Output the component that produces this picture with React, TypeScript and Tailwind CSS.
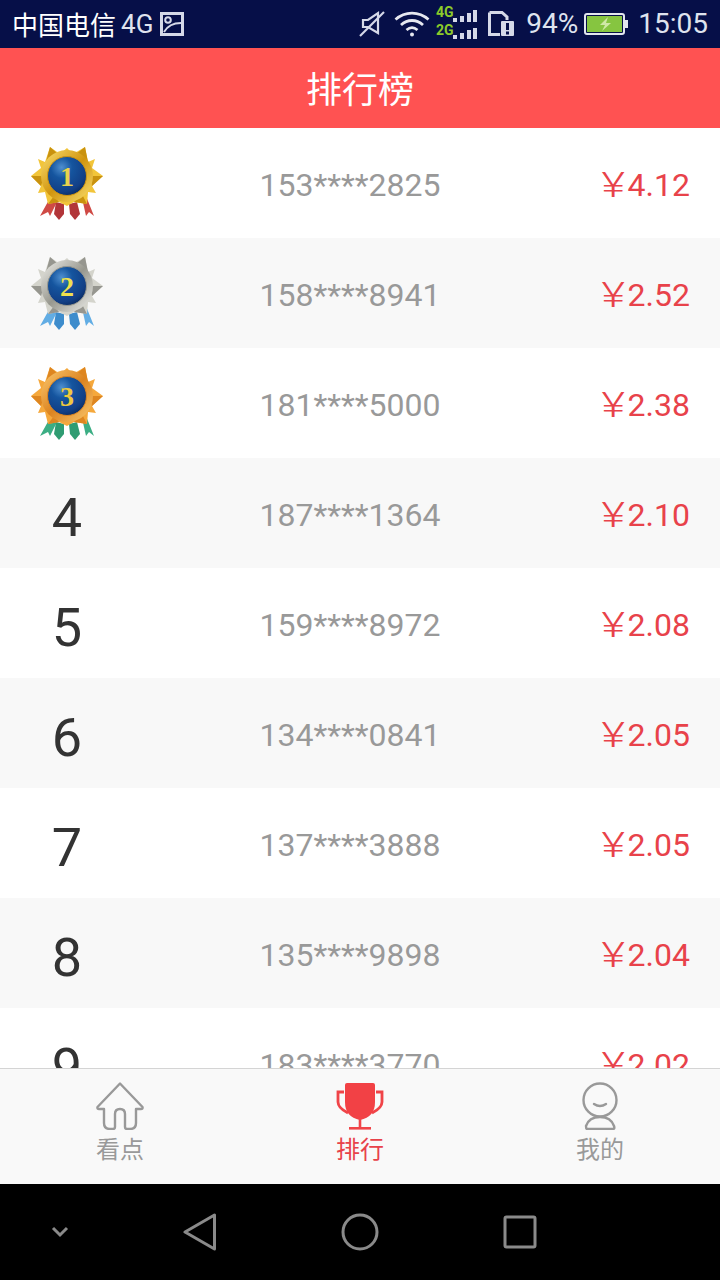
import React from "react";

const rows = [
  ["153****2825", "4.12"],
  ["158****8941", "2.52"],
  ["181****5000", "2.38"],
  ["187****1364", "2.10"],
  ["159****8972", "2.08"],
  ["134****0841", "2.05"],
  ["137****3888", "2.05"],
  ["135****9898", "2.04"],
  ["183****3770", "2.02"],
];

const cjk = "font-['Roboto','Noto_Sans_CJK_SC',sans-serif]";

type MedalProps = { n: number; star: string; starDark: string; ring: string; ringDark: string; ribA: string; ribB: string; num: string };

function Medal({ n, star, starDark, ring, ringDark, ribA, ribB, num }: MedalProps) {
  const id = `m${n}`;
  return (
    <svg width="78" height="80" viewBox="0 0 78 80">
      <defs>
        <radialGradient id={id} cx="36%" cy="28%" r="78%">
          <stop offset="0" stopColor="#4f8fcf" />
          <stop offset="0.35" stopColor="#15559f" />
          <stop offset="0.8" stopColor="#123f86" />
          <stop offset="1" stopColor="#0a2a5e" />
        </radialGradient>
        <linearGradient id={`${id}r`} x1="0" y1="0" x2="1" y2="1">
          <stop offset="0" stopColor={ring} />
          <stop offset="0.5" stopColor={ringDark} />
          <stop offset="1" stopColor={ring} />
        </linearGradient>
      </defs>
      <path d="M22 56 L12 74 L20 70 L22 74 L29 60Z" fill={ribA} />
      <path d="M28 60 L26 72 L31 78 L36 72 L36 62Z" fill={ribB} />
      <path d="M41 62 L42 72 L47 78 L52 72 L49 60Z" fill={ribB} />
      <path d="M54 56 L58 74 L61 70 L66 74 L58 54Z" fill={ribA} />
      <path d="M22 5 L32 12 L39 6 L45 12 L57 5 L60 20 L67 17 L64 26 L75 34 L64 44 L68 51 L60 50 L59 62 L46 60 L39 64 L31 60 L20 62 L17 50 L10 51 L13 44 L3 34 L13 26 L10 17 L17 20Z" fill={star} />
      <path d="M57 5 L60 20 L48 12Z M75 34 L64 44 L62 34Z M59 62 L46 60 L54 52Z M3 34 L16 34 L13 44Z M20 62 L26 54 L31 60Z M22 5 L30 12 L18 20Z" fill={starDark} />
      <circle cx="39" cy="34" r="26" fill={`url(#${id}r)`} />
      <circle cx="39" cy="34" r="19.500" fill={`url(#${id})`} stroke={ringDark} strokeWidth="1" />
      <text x="39" y="44" textAnchor="middle" fontFamily="'Liberation Serif',serif" fontWeight="700" fontSize="28" fill={num}>{n}</text>
    </svg>
  );
}

const medals = [
  { star: "#f2c53a", starDark: "#c9920f", ring: "#fbe070", ringDark: "#d1950f", ribA: "#cf4a45", ribB: "#b23539", num: "#e9d24e" },
  { star: "#d4d4cc", starDark: "#96968f", ring: "#f0f0ec", ringDark: "#98988f", ribA: "#62ade4", ribB: "#3d8ccc", num: "#efe04e" },
  { star: "#f5a83c", starDark: "#de8620", ring: "#fbc970", ringDark: "#dc8420", ribA: "#3cae84", ribB: "#2f9c72", num: "#efc83e" },
];

function Row({ i, phone, amount }: { i: number; phone: string; amount: string }) {
  return (
    <div className={`flex h-[110px] shrink-0 items-start ${i % 2 === 1 ? "bg-[#f8f8f8]" : "bg-white"}`}>
      <div className="flex h-full w-[134px] items-center justify-center text-[54px] leading-none text-[#333333]">
        {i < 3 ? (
          <div className="-mt-[2px]">
            <Medal n={i + 1} {...medals[i]} />
          </div>
        ) : (
          <span className="mt-[10px]">{i + 1}</span>
        )}
      </div>
      <div className="flex h-[114px] flex-1 items-center justify-center text-[32px] text-[#999999]">{phone}</div>
      <div className="flex h-[114px] w-[154px] items-center justify-end pr-[30px] text-[32px] text-[#e8424a]">
        <span className="mr-[3px] inline-block origin-right scale-x-[1.3] text-[35px] leading-none font-light">¥</span>
        <span>{amount}</span>
      </div>
    </div>
  );
}

function StatusBar() {
  return (
    <div className="flex h-[48px] shrink-0 items-center bg-[#060f48] pl-[12px] pr-[12px] text-[#dfe3ee]">
      <span className="font-['Noto_Sans_CJK_SC',sans-serif] text-[26px] leading-none text-white">中国电信</span>
      <span className="ml-[5px] text-[26px] leading-none">4G</span>
      <svg className="ml-[7px]" width="24" height="24" viewBox="0 0 24 24" fill="none" stroke="#d5d9e8" strokeWidth="3">
        <rect x="1.500" y="1.500" width="21" height="21" />
        <circle cx="8" cy="8" r="2.800" strokeWidth="2" />
        <path d="M4 20 C8 13 14 11 21 11" strokeWidth="2" />
      </svg>
      <div className="ml-auto flex items-center">
        <svg width="30" height="30" viewBox="0 0 30 30" fill="none" stroke="#d5d9e8" strokeWidth="2.200">
          <path d="M6 11 H11 L21 4 V24 L11 18 H6Z" />
          <path d="M3 27 L27 3" />
        </svg>
        <svg className="ml-[7px]" width="36" height="28" viewBox="0 0 36 28" fill="none" stroke="#e6e8f0" strokeWidth="2.800">
          <path d="M1.500 9.500 C11 1 25 1 34.500 9.500" />
          <path d="M7 15 C13.500 9 22.500 9 29 15" />
          <path d="M12.500 20 C16 17 20 17 23.500 20" />
          <circle cx="18" cy="24.500" r="2" fill="#e6e8f0" stroke="none" />
        </svg>
        <svg className="ml-[6px] overflow-visible" width="42" height="36" viewBox="0 0 42 36">
          <text x="0" y="11" fontFamily="Roboto" fontWeight="700" fontSize="14" fill="#8ccb2a">4G</text>
          <text x="0" y="29" fontFamily="Roboto" fontWeight="700" fontSize="14" fill="#8ccb2a">2G</text>
          <g fill="#d5d9e8">
            <rect x="17" y="12" width="4" height="4" />
            <rect x="24" y="10" width="4" height="6" />
            <rect x="31" y="7" width="4" height="9" />
            <rect x="37" y="4" width="4" height="12" />
            <rect x="17" y="29" width="4" height="4" />
            <rect x="24" y="27" width="4" height="6" />
            <rect x="31" y="24" width="4" height="9" />
            <rect x="37" y="22" width="4" height="11" />
          </g>
        </svg>
        <svg className="ml-[10px]" width="26" height="26" viewBox="0 0 26 26">
          <path d="M1.500 1.500 H14 L19 6 V9" fill="none" stroke="#d5d9e8" strokeWidth="3" />
          <path d="M1.500 1.500 V23.500 H12" fill="none" stroke="#d5d9e8" strokeWidth="3" />
          <rect x="13" y="10" width="13" height="15" rx="1" fill="#d5d9e8" />
          <rect x="18" y="12" width="3" height="7" fill="#060f48" />
          <rect x="18" y="20.500" width="3" height="3" fill="#060f48" />
        </svg>
        <span className="ml-[12px] text-[28px] leading-none">94%</span>
        <svg className="ml-[6px]" width="44" height="22" viewBox="0 0 44 22">
          <rect x="1" y="1" width="39" height="20" rx="2" fill="none" stroke="#e2e6ee" strokeWidth="2" />
          <rect x="3" y="3" width="35" height="16" fill="#86c540" />
          <rect x="41" y="7" width="3" height="8" fill="#e2e6ee" />
          <path d="M24 4 L16 12 H21 L18 18 L27 10 H22Z" fill="#cfe8a6" />
        </svg>
        <span className="ml-[10px] text-[28px] leading-none">15:05</span>
      </div>
    </div>
  );
}

function Tab({ label, active, children }: { label: string; active?: boolean; children: React.ReactNode }) {
  return (
    <div className="flex flex-col items-center pt-[13px]">
      {children}
      <span className={`mt-[3px] font-['Noto_Sans_CJK_SC',sans-serif] text-[24px] leading-[30px] ${active ? "text-[#e8424a]" : "text-[#999999]"}`}>{label}</span>
    </div>
  );
}

export default function App() {
  return (
    <div className={`flex h-[1280px] w-[720px] flex-col overflow-hidden bg-white ${cjk}`}>
      <StatusBar />
      <div className="flex h-[80px] shrink-0 items-center justify-center bg-[#ff5252] pb-[2px] font-['Noto_Sans_CJK_SC',sans-serif] text-[36px] leading-none text-white">
        排行榜
      </div>
      <div className="flex h-[940px] shrink-0 flex-col overflow-hidden">
        {rows.map((r, i) => (
          <Row key={i} i={i} phone={r[0]} amount={r[1]} />
        ))}
      </div>
      <div className="grid h-[116px] shrink-0 grid-cols-3 border-t border-[#d4d4d4] bg-[#f9f9f9]">
        <Tab label="看点">
          <svg width="48" height="48" viewBox="0 0 48 48" fill="none" stroke="#999999" strokeWidth="2.400" strokeLinejoin="round" strokeLinecap="round">
            <path d="M24 1.500 L1.500 25 Q1 27 3 27 H8 V41 Q8 47 14 47 H17 Q19 47 19 45 V32 Q19 27 24 27 Q29 27 29 32 V45 Q29 47 31 47 H34 Q40 47 40 41 V27 H45 Q47 27 46.500 25Z" />
          </svg>
        </Tab>
        <Tab label="排行" active>
          <svg width="48" height="48" viewBox="0 0 48 48">
            <path d="M8 10 H2 V20 Q2 26 12 31" fill="none" stroke="#f04448" strokeWidth="2.800" />
            <path d="M40 10 H46 V20 Q46 26 36 31" fill="none" stroke="#f04448" strokeWidth="2.800" />
            <path d="M9 3 Q9 1 11 1 H37 Q39 1 39 3 V20 Q39 35 24 38 Q9 35 9 20Z" fill="#f24145" />
            <rect x="22.700" y="36" width="2.600" height="10" fill="#f04448" />
            <rect x="13" y="45" width="22" height="2.600" fill="#f04448" />
          </svg>
        </Tab>
        <Tab label="我的">
          <svg width="48" height="48" viewBox="0 0 48 48" fill="none" stroke="#999999" strokeWidth="2.400" strokeLinecap="round">
            <circle cx="24" cy="18" r="16.500" />
            <path d="M18 22 Q24 26 30 22" />
            <path d="M11 47 H37 Q39 47 38 44 Q35 35 24 35 Q13 35 10 44 Q10 47 11 47Z" />
          </svg>
        </Tab>
      </div>
      <div className="flex h-[96px] shrink-0 items-center bg-black">
        <svg className="ml-[50px]" width="20" height="14" viewBox="0 0 20 14" fill="none" stroke="#8a8a8a" strokeWidth="3">
          <path d="M3 3 L10 10 L17 3" />
        </svg>
        <svg className="ml-[113px]" width="34" height="38" viewBox="0 0 34 38" fill="none" stroke="#8a8a8a" strokeWidth="3" strokeLinejoin="round">
          <path d="M31.500 2 V36 L2 19Z" />
        </svg>
        <svg className="ml-[124px]" width="38" height="38" viewBox="0 0 38 38" fill="none" stroke="#8a8a8a" strokeWidth="3">
          <circle cx="19" cy="19" r="17" />
        </svg>
        <svg className="ml-[124px]" width="34" height="34" viewBox="0 0 34 34" fill="none" stroke="#8a8a8a" strokeWidth="3" strokeLinejoin="round">
          <rect x="2" y="2" width="30" height="30" rx="1.500" />
        </svg>
      </div>
    </div>
  );
}
